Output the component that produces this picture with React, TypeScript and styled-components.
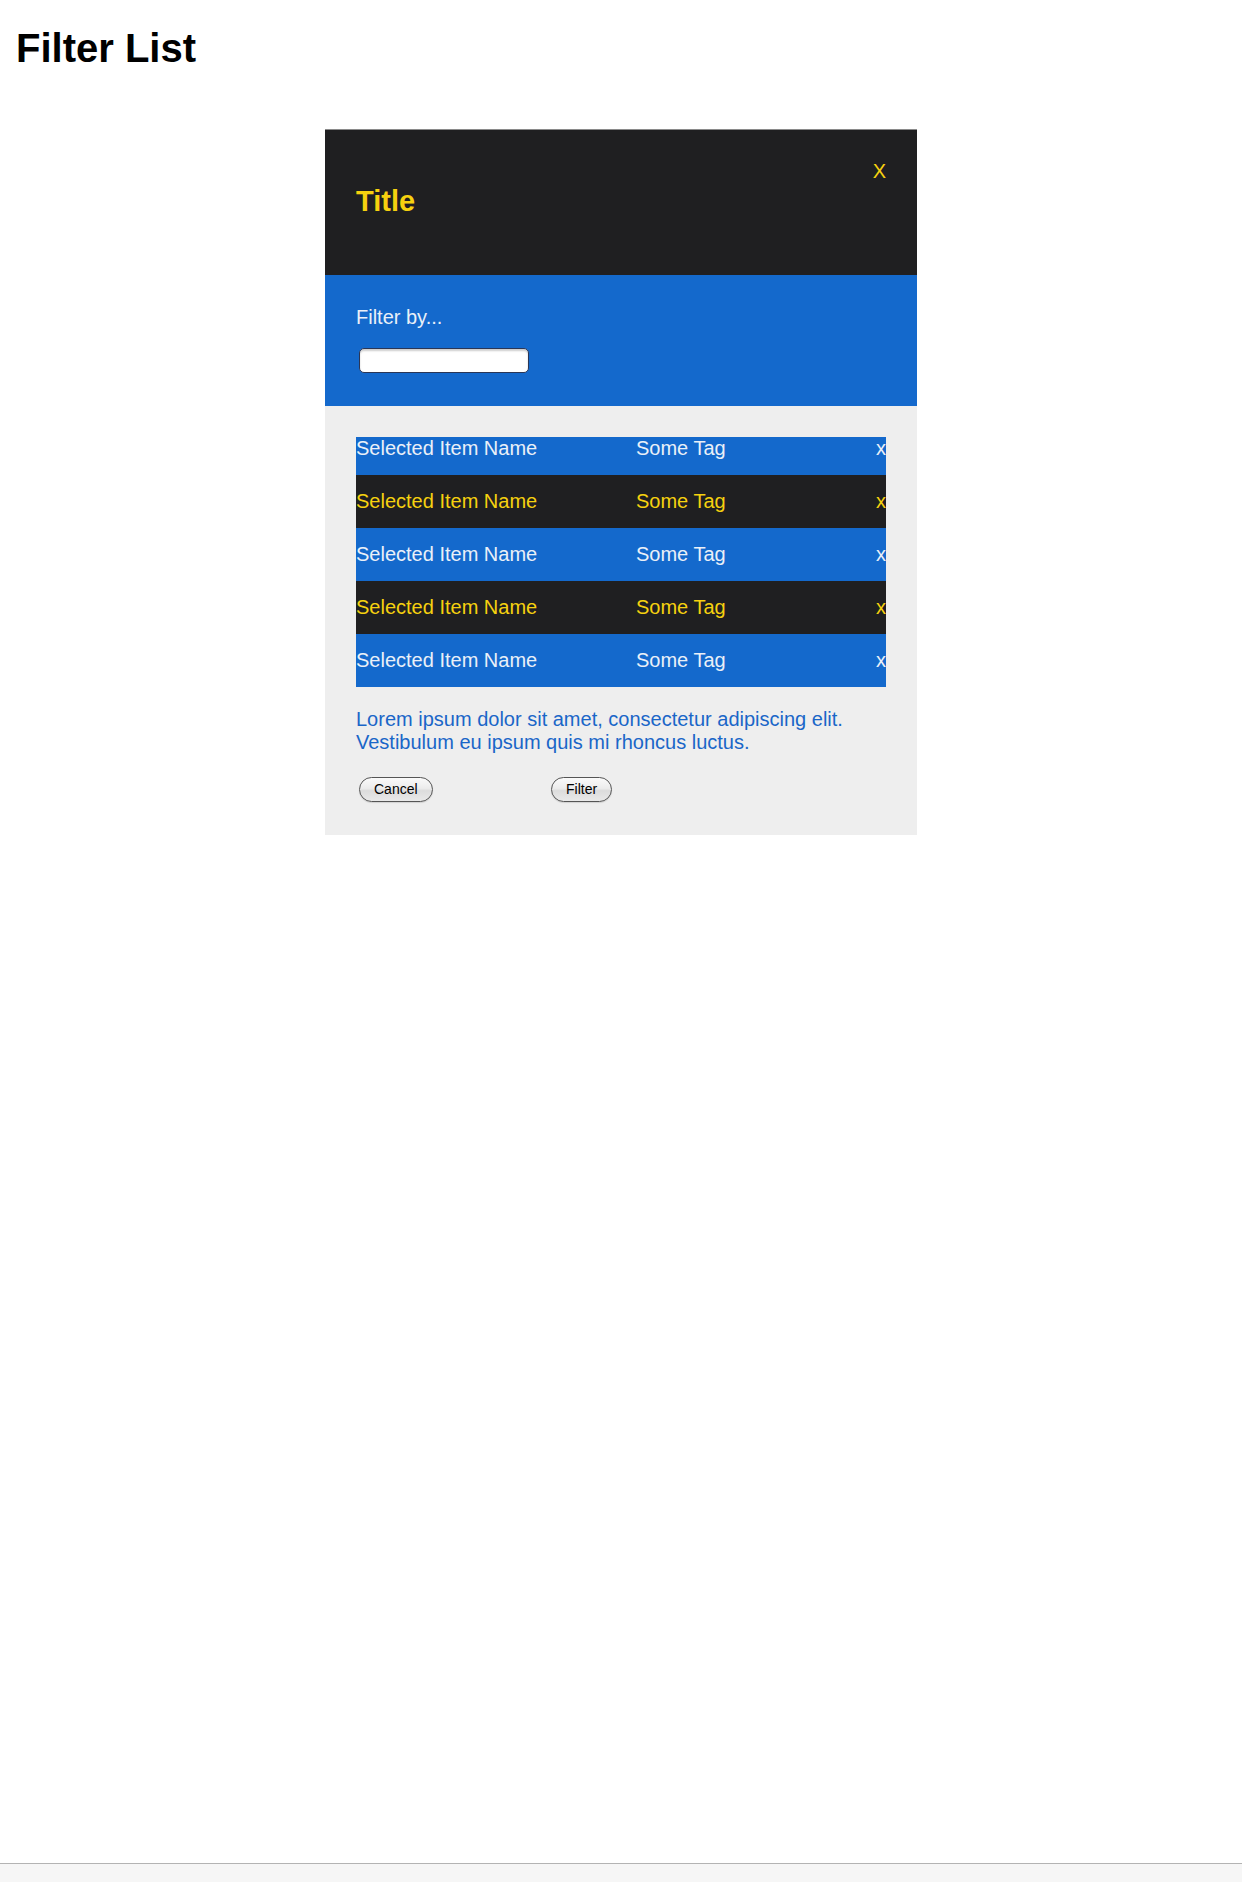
import React from "react";
import styled, { createGlobalStyle } from "styled-components";

const GlobalStyle = createGlobalStyle`
  html, body {
    margin: 0;
    padding: 0;
    background: #ffffff;
    font-family: "Liberation Sans", Arial, Helvetica, sans-serif;
  }
  * { box-sizing: border-box; }
`;

const Page = styled.div`
  display: flex;
  flex-direction: column;
  min-height: 100vh;
`;

const Main = styled.main`
  flex: 1;
  display: flex;
  flex-direction: column;
  padding: 25px 16px 0;
`;

const Heading = styled.h1`
  margin: 0;
  font-size: 40px;
  line-height: 47px;
  font-weight: 700;
  color: #000;
`;

const Modal = styled.section`
  width: 592px;
  margin: 57px auto 0;
  display: flex;
  flex-direction: column;
`;

const Header = styled.header`
  background: #1f1f21;
  border-top: 1px solid #8a8a8a;
  padding: 30px 31px 58px;
  display: flex;
  justify-content: space-between;
  align-items: flex-start;
`;

const Title = styled.h2`
  margin: 25px 0 0;
  font-size: 29px;
  line-height: 32px;
  font-weight: 700;
  color: #f6d10f;
`;

const Close = styled.button`
  background: none;
  border: none;
  padding: 0;
  margin: 0;
  font-family: inherit;
  font-size: 20px;
  line-height: 23px;
  color: #f6d10f;
  cursor: pointer;
`;

const FilterSection = styled.div`
  background: #1469cc;
  padding: 31px 31px 33px;
  display: flex;
  flex-direction: column;
  align-items: flex-start;
`;

const Label = styled.label`
  font-size: 20px;
  line-height: 23px;
  color: #eaf0f8;
  margin-bottom: 19px;
`;

const SearchInput = styled.input`
  width: 170px;
  height: 25px;
  margin: 0 0 0 3px;
  border: 1px solid #2a3656;
  border-radius: 5px;
  background: #ffffff;
  box-shadow: inset 0 2px 2px rgba(0, 0, 0, 0.2);
  font-family: inherit;
  font-size: 14px;
  padding: 0 6px;
`;

const Body = styled.div`
  background: #eeeeee;
  padding: 31px 31px 31px;
  display: flex;
  flex-direction: column;
`;

const List = styled.ul`
  list-style: none;
  margin: 0;
  padding: 0;
`;

const Row = styled.li<{ $dark: boolean; $first: boolean }>`
  display: grid;
  grid-template-columns: 280px 1fr auto;
  padding: ${(p) => (p.$first ? "0" : "15px")} 0 15px;
  background: ${(p) => (p.$dark ? "#1f1f21" : "#1469cc")};
  color: ${(p) => (p.$dark ? "#f6d10f" : "#eaf0f8")};
  font-size: 20px;
  line-height: 23px;
`;

const Remove = styled.span`
  text-align: right;
  cursor: pointer;
`;

const Description = styled.p`
  margin: 21px 0 0;
  font-size: 20px;
  line-height: 23px;
  color: #1a66c8;
`;

const Actions = styled.div`
  display: grid;
  grid-template-columns: 192px auto;
  justify-content: start;
  margin-top: 21px;
`;

const PillButton = styled.button`
  justify-self: start;
  margin: 2px 3px;
  height: 25px;
  padding: 0 14px;
  border: 1px solid #555;
  border-radius: 13px;
  background: linear-gradient(#fafafa 0%, #ececec 45%, #dcdcdc 55%, #e9e9e9 100%);
  box-shadow: 0 1px 1px rgba(0, 0, 0, 0.12);
  font-family: "Liberation Sans", Arial, sans-serif;
  font-size: 14px;
  line-height: 23px;
  color: #000;
  cursor: pointer;
`;

const StatusBar = styled.footer`
  height: 19px;
  border-top: 1px solid #b3b3b3;
  background: #f6f6f6;
`;

const items = [0, 1, 2, 3, 4];

export default function App() {
  return (
    <Page>
      <GlobalStyle />
      <Main>
        <Heading>Filter List</Heading>
        <Modal>
          <Header>
            <Title>Title</Title>
            <Close aria-label="Close">X</Close>
          </Header>
          <FilterSection>
            <Label htmlFor="filter-input">Filter by...</Label>
            <SearchInput id="filter-input" type="text" />
          </FilterSection>
          <Body>
            <List>
              {items.map((i) => (
                <Row key={i} $dark={i % 2 === 1} $first={i === 0}>
                  <span>Selected Item Name</span>
                  <span>Some Tag</span>
                  <Remove>x</Remove>
                </Row>
              ))}
            </List>
            <Description>
              Lorem ipsum dolor sit amet, consectetur adipiscing elit.
              <br />
              Vestibulum eu ipsum quis mi rhoncus luctus.
            </Description>
            <Actions>
              <PillButton>Cancel</PillButton>
              <PillButton>Filter</PillButton>
            </Actions>
          </Body>
        </Modal>
      </Main>
      <StatusBar />
    </Page>
  );
}
